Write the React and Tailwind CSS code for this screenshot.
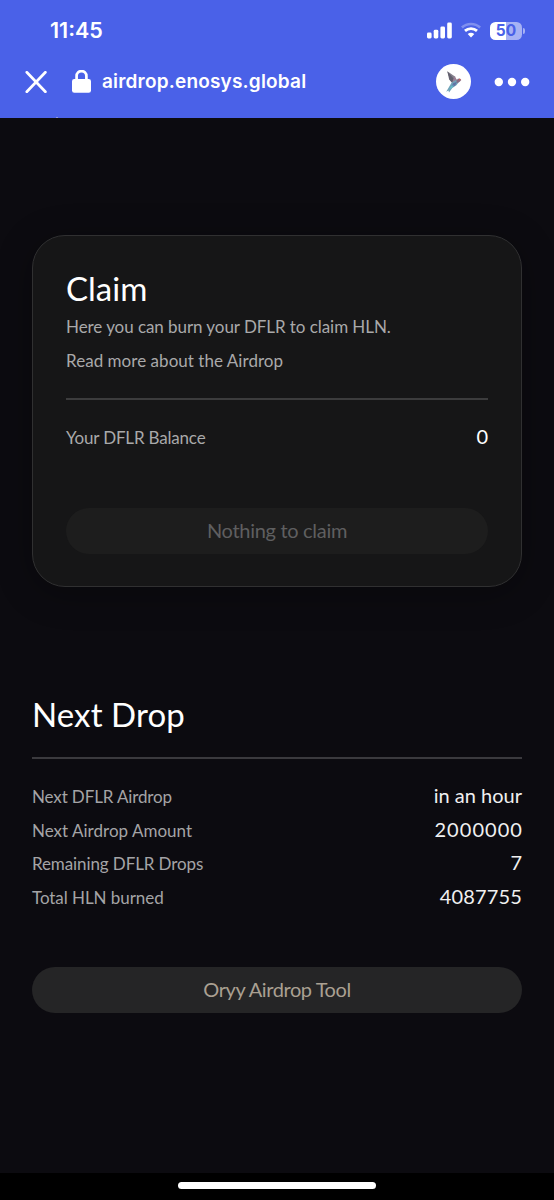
const stats = [
  { label: 'Next DFLR Airdrop', value: 'in an hour', labelClass: 'tracking-[-0.13px]', valueClass: '' },
  { label: 'Next Airdrop Amount', value: '2000000', labelClass: 'tracking-[0.02px]', valueClass: 'tracking-[1.05px] -mr-px' },
  { label: 'Remaining DFLR Drops', value: '7', labelClass: 'tracking-[-0.1px]', valueClass: '' },
  { label: 'Total HLN burned', value: '4087755', labelClass: 'tracking-[-0.06px]', valueClass: 'tracking-[0.15px]' },
];

function Signal() {
  return (
    <svg width="25" height="17" viewBox="0 0 25 17" fill="white">
      <rect x="0" y="10.5" width="4.6" height="6" rx="1.4" />
      <rect x="6.7" y="7.8" width="4.6" height="8.7" rx="1.4" />
      <rect x="13.4" y="4.4" width="4.6" height="12.1" rx="1.4" />
      <rect x="20.2" y="0.5" width="4.6" height="16" rx="1.4" />
    </svg>
  );
}

function Wifi() {
  return (
    <svg width="20" height="17" viewBox="0 0 20 17" fill="none" stroke="white">
      <path d="M.9 5.5C6 .8 14 .8 19.1 5.5" strokeWidth="2.7" opacity=".3" />
      <path d="M4 8.9C7.4 5.8 12.6 5.8 16 8.9" strokeWidth="2.8" />
      <path d="M6.7 12.1Q10 9.3 13.3 12.1L10 15.6Z" fill="white" stroke="none" />
    </svg>
  );
}

function Battery() {
  return (
    <div className="flex items-center gap-px">
      <div className="flex h-[18px] w-[32px] items-center justify-center rounded-[5.5px] bg-[linear-gradient(90deg,#fff_50%,#a7b2f4_50%)] font-['Inter'] text-[15.5px] font-bold leading-none text-[#4a61e8]">
        50
      </div>
      <div className="h-[6px] w-[2px] rounded-r-full bg-[#a7b2f4]" />
    </div>
  );
}

function Bird() {
  return (
    <svg width="35" height="35" viewBox="0 0 35 35">
      <circle cx="17.5" cy="17.5" r="17.5" fill="white" />
      <path d="M11.3 7.2 18.6 12.2 21 16.6 17 19.8 14.5 17Z" fill="#85808c" />
      <path d="M11.3 7.2 17.6 14.6 17 19.8 13.2 15.4Z" fill="#62606f" />
      <path d="M18.6 12.2 20.6 15.6 19 19.3 16.2 18.2Z" fill="#9a7f96" />
      <path d="M15.5 18.7 20 16 23.6 17.3 20.4 21.3 16.3 24 13 28.4 12.5 26.6 10.2 27.8Z" fill="#71a3b8" />
      <path d="M17.3 19 21 18 19 21.8 15.2 23.3Z" fill="#6273a5" />
      <path d="M20.3 16.8 21.8 14.8 23.8 14.6 25.3 16 23.4 18 21 19Z" fill="#8b6b82" />
      <circle cx="23.8" cy="15.6" r=".8" fill="#d35e55" />
      <path d="M15.2 22.2 18 20.8 16 23.8 13.2 25.4Z" fill="#62c3cb" />
    </svg>
  );
}

export default function App() {
  return (
    <div className="flex h-[1200px] w-[554px] flex-col overflow-hidden bg-[#0c0b10] font-['Lato',sans-serif] text-white">
      <header className="h-[118px] shrink-0 bg-[#4a61e8]">
        <div className="flex h-[60px] items-center pl-[50px] pr-[29px] pt-px">
          <div className="font-['Inter'] text-[21.5px] font-semibold leading-none">11:45</div>
          <div className="ml-auto flex items-center gap-[9px]">
            <Signal />
            <Wifi />
            <Battery />
          </div>
        </div>
        <div className="flex h-[43px] items-center pl-[25px] pr-[24px]">
          <svg width="22" height="22" viewBox="0 0 22 22" stroke="white" strokeWidth="2.7" strokeLinecap="round">
            <path d="M1.8 1.3 20.4 20.7M20.4 1.3 1.8 20.7" />
          </svg>
          <svg className="ml-[25px]" width="19" height="23" viewBox="0 0 19 23">
            <rect x="0" y="9" width="19" height="13.7" rx="2.3" fill="white" />
            <path d="M4.6 10V6a4.9 4.9 0 0 1 9.8 0v4" fill="none" stroke="white" strokeWidth="2.7" />
          </svg>
          <div className="ml-[11px] whitespace-nowrap font-['Inter'] text-[19px] font-semibold leading-none tracking-[0.01em]">airdrop.enosys.global</div>
          <div className="ml-auto flex items-center gap-[23px]">
            <Bird />
            <svg width="36" height="10" viewBox="0 0 36 10" fill="white">
              <circle cx="4.8" cy="5" r="4.2" />
              <circle cx="18" cy="5" r="4.2" />
              <circle cx="31.2" cy="5" r="4.2" />
            </svg>
          </div>
        </div>
        <div className="ml-[56px] mt-[14px] h-px w-[2px] bg-[#8d98dd]" />
      </header>

      <main className="flex grow flex-col px-[32px] pt-[117px]">
        <section className="h-[352px] rounded-[33px] border border-[#303031] bg-[#161617] px-[33px] shadow-[0_6px_36px_rgba(0,0,0,0.3)]">
          <h1 className="mt-[31px] text-[33px] leading-[42px]">Claim</h1>
          <p className="mt-px text-[17px] leading-[33px] tracking-[-0.06px] text-[#a9a9aa]">Here you can burn your DFLR to claim HLN.</p>
          <p className="mt-px text-[17px] leading-[33px] tracking-[0.04px] text-[#a9a9aa]">Read more about the Airdrop</p>
          <div className="mt-[21px] h-[1.5px] bg-[#3c3c3d]" />
          <div className="mt-[21px] flex h-[34px] items-center justify-between">
            <span className="text-[17px] tracking-[-0.18px] text-[#a9a9aa]">Your DFLR Balance</span>
            <span className="pb-[3px] text-[20px]">0</span>
          </div>
          <button className="mt-[53px] block h-[46px] w-full rounded-full bg-[#1d1d1d] pb-[2px] text-[20px] tracking-[-0.3px] text-[#5f5f60]">Nothing to claim</button>
        </section>

        <section className="pt-[106px]">
          <h2 className="text-[33px] leading-[42px] tracking-[0.1px]">Next Drop</h2>
          <div className="mt-[22px] h-[1.5px] bg-[#3b3a3e]" />
          <div className="mt-[21.5px]">
            {stats.map((s) => (
              <div key={s.label} className="flex h-[33.5px] items-center justify-between">
                <span className={`text-[17px] text-[#a4a4a6] ${s.labelClass}`}>{s.label}</span>
                <span className={`pb-[3px] text-[20px] text-[#f0f0f0] ${s.valueClass}`}>{s.value}</span>
              </div>
            ))}
          </div>
          <button className="mt-[53px] block h-[45.5px] w-full rounded-full bg-[#252526] pb-[2px] text-[20px] tracking-[-0.43px] text-[#aaa092]">Oryy Airdrop Tool</button>
        </section>
      </main>
      <footer className="flex h-[27px] shrink-0 justify-center bg-black pt-[9px]">
        <div className="h-[7px] w-[198px] rounded-full bg-white" />
      </footer>
    </div>
  );
}
